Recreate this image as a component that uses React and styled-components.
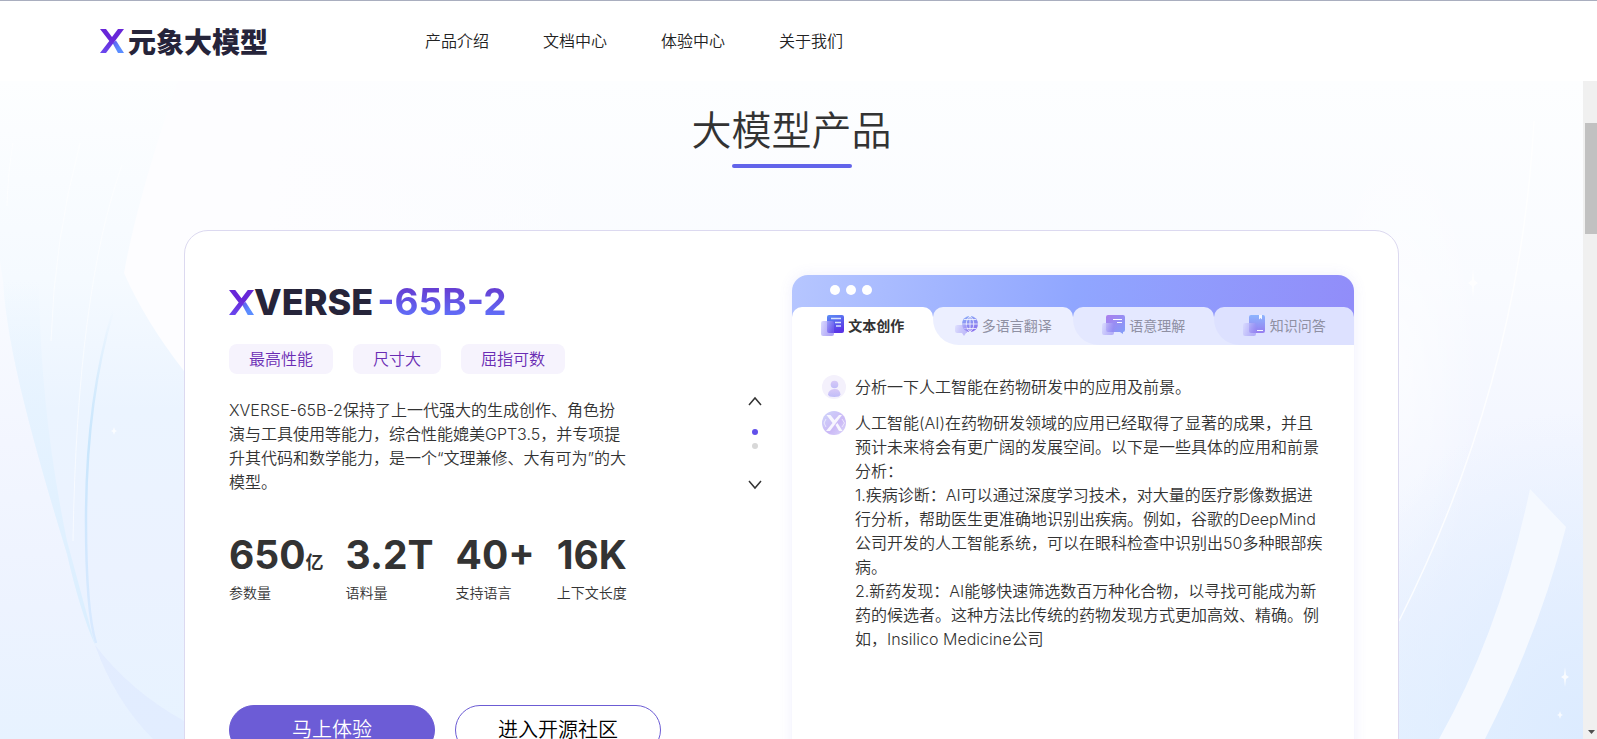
import React from "react";
import styled, { createGlobalStyle } from "styled-components";

const Global = createGlobalStyle`
  *{box-sizing:border-box;}
  body{margin:0;background:#fff;color:#333;font-family:Inter,"Noto Sans CJK SC",sans-serif;font-weight:350;font-size:16px;line-height:24px;}
  h1,h2,p,ul,dl,dd,dt{margin:0;padding:0;font-weight:inherit;}
  #root{height:100vh;overflow:hidden;}
`;
const Page = styled.div`height:100%;display:flex;flex-direction:column;`;
const Header = styled.header`
  flex:none;height:81px;border-top:1px solid #a9aebf;background:#fff;
  display:flex;align-items:center;padding:0 100px;
`;
const Brand = styled.a`
  width:325px;display:flex;align-items:center;gap:4px;color:#26243a;text-decoration:none;
  font-family:"Noto Sans CJK SC",sans-serif;font-weight:900;font-size:28px;line-height:32px;
`;
const Nav = styled.nav`display:flex;gap:54px;`;
const NavLink = styled.a`color:#222;text-decoration:none;`;
const Body = styled.div`flex:1;min-height:0;display:flex;`;
const Main = styled.main`
  flex:1;min-width:0;position:relative;overflow:hidden;
  display:flex;flex-direction:column;align-items:center;
`;
const Backdrop = styled.svg`position:absolute;inset:0;width:100%;height:100%;z-index:-1;`;
const Title = styled.h1`flex:none;margin-top:20px;font-size:40px;line-height:60px;`;
const Underline = styled.div`flex:none;width:120px;height:4px;border-radius:2px;background:#6264ea;margin-top:3px;`;
const Card = styled.section`
  flex:none;width:calc(100% - 368px);min-height:640px;margin-top:62px;background:#fff;border:1px solid #dcd9f0;border-radius:24px;
  padding:44px;display:flex;align-items:stretch;
`;
const Info = styled.div`flex:1;min-width:0;padding-top:2px;`;
const Model = styled.h2`
  display:flex;align-items:center;height:50px;line-height:50px;color:#26243a;
`;
const Word = styled.span`font-weight:800;font-size:36px;`;
const Version = styled.span`
  margin-left:4px;font-size:37px;font-weight:700;color:transparent;
  background:linear-gradient(#6640d4 25%,#6070fa 80%);background-clip:text;
`;
const Tags = styled.ul`list-style:none;display:flex;gap:20px;margin-top:17px;`;
const Tag = styled.li`padding:3px 20px;border-radius:8px;background:#f6f3fd;color:#6a2cb4;`;
const Intro = styled.p`width:400px;margin-top:24px;`;
const Stats = styled.dl`display:flex;gap:22px;margin-top:37px;`;
const Stat = styled.div`display:flex;flex-direction:column-reverse;gap:2px;`;
const StatName = styled.dt`font-size:14px;line-height:24px;`;
const StatValue = styled.dd`height:48px;font-size:39px;line-height:48px;font-weight:700;`;
const Unit = styled.small`font-size:18px;line-height:1;font-weight:600;`;
const Actions = styled.div`display:flex;gap:20px;margin-top:100px;`;
const Button = styled.button`
  width:206px;height:50px;border-radius:25px;font:inherit;font-size:20px;padding:0;
  border:1px solid #6c5cd4;background:${p => p.$primary ? "#6c5cd6" : "#fff"};color:${p => p.$primary ? "#fff" : "#000"};
`;
const Pager = styled.div`width:14px;margin:120px 30px 0 0;display:flex;flex-direction:column;align-items:center;`;
const Arrow = styled.button`border:0;padding:0;background:none;width:14px;height:12px;display:flex;align-items:center;`;
const Dots = styled.div`display:flex;flex-direction:column;gap:8px;margin:22px 0 30px;`;
const Dot = styled.span`width:6px;height:6px;border-radius:50%;background:${p => p.$on ? "#6150ea" : "#d8d8d8"};`;
const Demo = styled.div`
  width:562px;flex:none;border-radius:16px 16px 0 0;background:#fff;box-shadow:0 0 14px rgba(98,100,234,.1);overflow:hidden;
`;
const Bar = styled.div`
  height:70px;background:linear-gradient(100deg,#b6c6ff,#90a6ff 50%,#918cf9);display:flex;flex-direction:column;justify-content:space-between;
`;
const Lights = styled.div`display:flex;gap:6px;padding:10px 0 0 38px;`;
const Light = styled.span`width:10px;height:10px;border-radius:50%;background:#fff;`;
const TabList = styled.div`display:flex;`;
const TabSlot = styled.div`flex:1;display:flex;background:linear-gradient(transparent 10px,${p => p.$under} 10px);`;
const Tab = styled.button`
  flex:1;height:38px;border:0;padding:0;display:flex;align-items:center;justify-content:center;gap:4px;
  font:inherit;font-size:14px;font-weight:${p => p.$on ? 700 : 400};color:${p => p.$on ? "#333" : "#8f90a3"};
  background:${p => p.$bg};border-radius:${p => p.$on ? "10px 10px 0 0" : "10px 10px 0 26px"};
`;
const Chat = styled.div`padding:30px 28px 30px 30px;display:flex;flex-direction:column;gap:12px;`;
const Message = styled.div`display:flex;gap:9px;`;
const Text = styled.p`flex:1;min-width:0;white-space:pre-line;`;
const Scroll = styled.div`
  flex:none;width:14px;background:#f0f0f0;padding:42px 0 4px;
  display:flex;flex-direction:column;justify-content:space-between;align-items:flex-end;
`;
const Thumb = styled.div`width:12px;height:111px;background:#c1c1c1;`;
const Defs = styled.svg`position:absolute;`;

const XMark = ({ size, id }) => (
  <svg width={size} height={size} viewBox="0 0 24 24" aria-hidden="true">
    <defs>
      <linearGradient id={id + "a"} x1="0" y1="0" x2="0" y2="1"><stop offset=".4" stopColor="#6826d8" /><stop offset="1" stopColor="#6a48ee" /></linearGradient>
      <linearGradient id={id + "b"} x1="0" y1="0" x2="1" y2="1"><stop stopColor="#6458ee" /><stop offset=".6" stopColor="#5b8dff" /></linearGradient>
    </defs>
    <path d="M12.500 14L16 11.500L24 24H18Z" fill={`url(#${id}b)`} />
    <path d="M0 0H6L12 8L18 0H24L6 24H0L9.300 12Z" fill={`url(#${id}a)`} />
  </svg>
);

const icons = {
  doc: (
    <>
      <rect x="7" y="1" width="17" height="18" rx="2" fill="url(#gBlue)" />
      <path d="M11 4.500H21M15 8.500H21M16 12H21" stroke="#d8e4ff" strokeWidth="1.500" />
      <rect x="1" y="7" width="13" height="15" rx="2" fill="url(#gGlass)" />
    </>
  ),
  globe: (
    <g opacity=".65">
      <circle cx="16" cy="10" r="8" fill="url(#gBlue)" />
      <path d="M16 2V18M8 10H24M10 5.500H22M10 14.500H22M16 2C11 6 11 14 16 18M16 2C21 6 21 14 16 18" stroke="#fff" strokeWidth=".8" fill="none" />
      <path d="M3 11H13V19H12L10 22L8 19H3Q1 19 1 17V13Q1 11 3 11Z" fill="url(#gGlass)" />
    </g>
  ),
  chat: (
    <g opacity=".75">
      <path d="M7 1H22Q24 1 24 3V16Q24 18 22 18V20L19 18H7Q5 18 5 16V3Q5 1 7 1Z" fill="url(#gPurple)" />
      <path d="M12 5.500H21M16 8.500H21" stroke="#fff" strokeWidth="1.200" />
      <rect x="1" y="9" width="12" height="12" rx="2" fill="url(#gGlass)" />
    </g>
  ),
  book: (
    <g opacity=".7">
      <path d="M9 1H21Q23 1 23 3V17Q23 19 21 19H9Q7 19 7 17V3Q7 1 9 1Z" fill="url(#gBook)" />
      <path d="M17 1H20V5.500L18.500 4L17 5.500Z" fill="#fff" /><path d="M15 16.500H21" stroke="#fff" />
      <rect x="1" y="9" width="13" height="13" rx="2" fill="url(#gGlass)" />
    </g>
  ),
};
const TabIcon = ({ name }) => <svg width="24" height="24" viewBox="0 0 24 24" aria-hidden="true">{icons[name]}</svg>;

const SharedGradients = () => (
  <Defs width="0" height="0" aria-hidden="true">
    <defs>
      <linearGradient id="gBlue" x1="0" y1="0" x2=".4" y2="1"><stop stopColor="#5b8ff5" /><stop offset="1" stopColor="#5a35e6" /></linearGradient>
      <linearGradient id="gBook" x1="0" y1="0" x2="0" y2="1"><stop stopColor="#6ba2ff" /><stop offset="1" stopColor="#7a55ea" /></linearGradient>
      <linearGradient id="gPurple" x1="0" y1="0" x2="1" y2="1"><stop stopColor="#9a5ce8" /><stop offset="1" stopColor="#5f86f8" /></linearGradient>
      <linearGradient id="gGlass" x1="0" y1="0" x2="1" y2=".3"><stop stopColor="#d9daff" stopOpacity=".9" /><stop offset="1" stopColor="#7d6cf0" stopOpacity=".6" /></linearGradient>
      <linearGradient id="gBot" x1="0" y1="0" x2="1" y2="1"><stop stopColor="#cfd6fb" /><stop offset=".6" stopColor="#cbb9f6" /><stop offset="1" stopColor="#dcd8fb" /></linearGradient>
      <linearGradient id="gUser" x1="0" y1="0" x2="0" y2="1"><stop stopColor="#d8c9f7" /><stop offset="1" stopColor="#c0bdf8" /></linearGradient>
    </defs>
  </Defs>
);
const UserAvatar = () => (
  <svg width="24" height="24" viewBox="0 0 24 24" aria-hidden="true">
    <circle cx="12" cy="12" r="12" fill="#f4f1fc" /><circle cx="12.500" cy="9.500" r="3.800" fill="url(#gUser)" />
    <path d="M6 19.500Q6.500 14.500 12.200 14T18.500 19.500Q18 22 12.200 22T6 19.500Z" fill="url(#gUser)" />
  </svg>
);
const BotAvatar = () => (
  <svg width="24" height="24" viewBox="0 0 24 24" aria-hidden="true">
    <circle cx="12" cy="12" r="12" fill="url(#gBot)" />
    <path d="M4.500 4H8.500L12.500 9L17 4H20L8 20H4L10.500 12ZM13.500 14L15.500 12L20.500 20H17Z" fill="#fff" fillOpacity=".85" />
    <path d="M4 8L2 12L4 16M20 8L22.500 12L20 16" stroke="#fff" fill="none" opacity=".6" />
  </svg>
);
const Chevron = ({ d }) => <svg width="14" height="10" viewBox="0 0 14 10" fill="none" stroke="#333" strokeWidth="1.500"><path d={d} /></svg>;

const Scenery = () => (
  <Backdrop viewBox="0 0 1583 658" preserveAspectRatio="none" aria-hidden="true">
    <defs>
      <linearGradient id="sky" x1="0" y1="0" x2="0" y2="1"><stop stopColor="#fdfeff" /><stop offset=".3" stopColor="#f9fbff" /><stop offset=".55" stopColor="#f3f6ff" /><stop offset=".8" stopColor="#edf3ff" /><stop offset="1" stopColor="#e7f2ff" /></linearGradient>
      <linearGradient id="veil" x1="0" y1="0" x2="0" y2="1"><stop stopColor="#fdfeff" /><stop offset=".3" stopColor="#f5faff" /><stop offset=".5" stopColor="#ebf4ff" /><stop offset=".75" stopColor="#ebf2ff" /><stop offset="1" stopColor="#e7f3ff" /></linearGradient>
      <linearGradient id="ribbon" x1="0" y1="0" x2="0" y2="1"><stop stopColor="#e4f3ff" stopOpacity="0" /><stop offset=".4" stopColor="#e4f2ff" stopOpacity=".8" /><stop offset="1" stopColor="#d9eeff" /></linearGradient>
      <linearGradient id="edge" x1="0" y1="0" x2="0" y2="1"><stop stopColor="#bfe2fb" stopOpacity="0" /><stop offset=".4" stopColor="#c9e6fc" /><stop offset="1" stopColor="#c9e2ff" stopOpacity=".5" /></linearGradient>
      <linearGradient id="leaf"><stop stopColor="#fdfdff" /><stop offset=".3" stopColor="#fdfdff" /><stop offset="1" stopColor="#fdfdff" stopOpacity="0" /></linearGradient>
      <radialGradient id="glow" cx="1" cy="1" r="1"><stop stopColor="#dcebff" /><stop offset="1" stopColor="#dcebff" stopOpacity="0" /></radialGradient>
      <radialGradient id="haze"><stop stopColor="#fff" stopOpacity=".6" /><stop offset="1" stopColor="#fff" stopOpacity="0" /></radialGradient>
    </defs>
    <rect width="1583" height="658" fill="url(#sky)" />
    <path d="M0 0H178L184 290V658H153Q115 620 95 564Q80 530 67 473Q40 385 25 325Q6 250 3 200L0 180Z" fill="url(#veil)" />
    <path d="M178 0C160 50 135 130 124 192Q145 240 184 290H600V0Z" fill="url(#leaf)" />
    <path d="M3 200Q6 250 25 325Q40 385 67 473Q80 530 95 564Q86 530 67 460Q40 330 39 200Z" fill="url(#ribbon)" />
    <path d="M113 230Q86 320 86 440Q86 530 96 562" fill="none" stroke="url(#edge)" strokeWidth="2.500" />
    <path d="M13 62Q8 90 7 125M80 62Q54 160 51 260M122 84Q77 210 73 460" fill="none" stroke="#fff" strokeOpacity=".6" />
    <path d="M95 564Q130 610 184 640V658H153Q115 620 95 564Z" fill="#dfeaff" opacity=".7" />
    <ellipse cx="1400" cy="280" rx="80" ry="260" fill="url(#haze)" />
    <rect x="1300" y="330" width="283" height="328" fill="url(#glow)" />
    <path d="M1534 40Q1520 300 1399 540" fill="none" stroke="#fff" strokeOpacity=".8" strokeWidth="1.500" />
    <path d="M1530 408L1566 446Q1540 550 1485 658H1439Q1500 550 1530 408Z" fill="#f5f9ff" />
    <path d="M1473 187l1 12 4 3-4 3-1 12-1-12-4-3 4-3ZM1565 586l1 8 3 2-3 2-1 8-1-8-3-2 3-2ZM1560 630l1 3 2 1-2 1-1 3-1-3-2-1 2-1ZM114 346l1 3 2 1-2 1-1 3-1-3-2-1 2-1Z" fill="#fff" fillOpacity=".8" />
  </Backdrop>
);

const tags = ["最高性能", "尺寸大", "屈指可数"];
const stats = [["650", "参数量", "亿"], ["3.2T", "语料量"], ["40+", "支持语言"], ["16K", "上下文长度"]];
const tabs = [
  { name: "文本创作", icon: "doc", bg: "#fff", under: "#fff" },
  { name: "多语言翻译", icon: "globe", bg: "#ecefff", under: "#fff" },
  { name: "语意理解", icon: "chat", bg: "#e4e8ff", under: "#ecefff" },
  { name: "知识问答", icon: "book", bg: "#dde1ff", under: "#e4e8ff" },
];
const answer = `人工智能(AI)在药物研发领域的应用已经取得了显著的成果，并且预计未来将会有更广阔的发展空间。以下是一些具体的应用和前景分析：
1.疾病诊断：AI可以通过深度学习技术，对大量的医疗影像数据进行分析，帮助医生更准确地识别出疾病。例如，谷歌的DeepMind公司开发的人工智能系统，可以在眼科检查中识别出50多种眼部疾病。
2.新药发现：AI能够快速筛选数百万种化合物，以寻找可能成为新药的候选者。这种方法比传统的药物发现方式更加高效、精确。例如，Insilico Medicine公司`;

export default function App() {
  return (
    <>
      <Global />
      <SharedGradients />
      <Page>
        <Header>
          <Brand href="#"><XMark size={24} id="brandX" />元象大模型</Brand>
          <Nav>{["产品介绍", "文档中心", "体验中心", "关于我们"].map(n => <NavLink key={n} href="#">{n}</NavLink>)}</Nav>
        </Header>
        <Body>
          <Main>
            <Scenery />
            <Title>大模型产品</Title>
            <Underline />
            <Card>
              <Info>
                <Model><XMark size={25} id="modelX" /><Word>VERSE</Word><Version>-65B-2</Version></Model>
                <Tags>{tags.map(t => <Tag key={t}>{t}</Tag>)}</Tags>
                <Intro>XVERSE-65B-2保持了上一代强大的生成创作、角色扮演与工具使用等能力，综合性能媲美GPT3.5，并专项提升其代码和数学能力，是一个“文理兼修、大有可为”的大模型。</Intro>
                <Stats>
                  {stats.map(([v, n, u]) => <Stat key={n}><StatName>{n}</StatName><StatValue>{v}{u && <Unit>{u}</Unit>}</StatValue></Stat>)}
                </Stats>
                <Actions><Button $primary>马上体验</Button><Button>进入开源社区</Button></Actions>
              </Info>
              <Pager>
                <Arrow aria-label="上一个"><Chevron d="M1 9L7 2L13 9" /></Arrow>
                <Dots><Dot $on /><Dot /></Dots>
                <Arrow aria-label="下一个"><Chevron d="M1 1L7 8L13 1" /></Arrow>
              </Pager>
              <Demo>
                <Bar>
                  <Lights><Light /><Light /><Light /></Lights>
                  <TabList role="tablist">
                    {tabs.map((t, i) => (
                      <TabSlot key={t.name} $under={t.under}>
                        <Tab role="tab" aria-selected={i === 0} $on={i === 0} $bg={t.bg}><TabIcon name={t.icon} />{t.name}</Tab>
                      </TabSlot>
                    ))}
                  </TabList>
                </Bar>
                <Chat>
                  <Message><UserAvatar /><Text>分析一下人工智能在药物研发中的应用及前景。</Text></Message>
                  <Message><BotAvatar /><Text>{answer}</Text></Message>
                </Chat>
              </Demo>
            </Card>
          </Main>
          <Scroll aria-hidden="true"><Thumb /><svg width="12" height="5" viewBox="0 0 12 5"><path d="M3 0H10L6.500 4Z" fill="#505050" /></svg></Scroll>
        </Body>
      </Page>
    </>
  );
}
